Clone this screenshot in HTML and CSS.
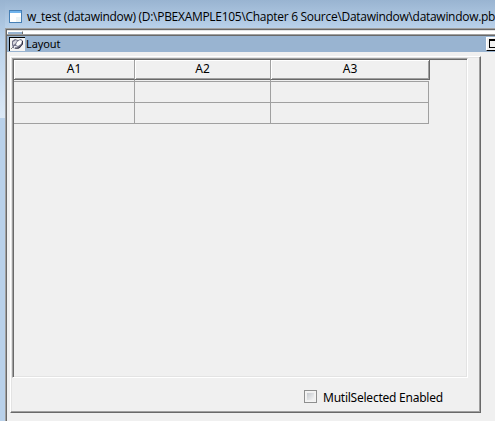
FILE: index.html
```html
<!DOCTYPE html>
<html lang="en">
<head>
<meta charset="utf-8">
<title>w_test</title>
<link rel="stylesheet" href="styles.css">
</head>
<body>
<div class="window">
  <header class="caption">
    <svg class="app-icon" width="13" height="13" viewBox="0 0 13 13" shape-rendering="crispEdges">
      <rect width="13" height="13" fill="#467fb5"/>
      <rect x="1" y="1" width="11" height="2" fill="#71b4ed"/>
      <rect x="1" y="3" width="11" height="9" fill="#fff"/>
      <rect x="7" y="7" width="5" height="5" fill="#eef4f5"/>
    </svg>
    <span class="caption-text">w_test (datawindow) (D:\PBEXAMPLE105\Chapter 6 Source\Datawindow\datawindow.pb</span>
  </header>
  <main class="client">
    <div class="splitter"><div class="thumb"></div></div>
    <div class="pane-title">
      <svg class="pin" width="16" height="14" viewBox="0 0 16 14">
        <rect width="16" height="14" fill="#f4f4f4"/>
        <path d="M0 0H16V1H1V14H0Z" fill="#000"/>
        <path d="M2 12L5 9" stroke="#888"/>
        <path d="M3 4L6 2L9 3L12 2L14 4V7L11 11L8 12L4 11L3 8Z" fill="#74748a"/>
        <path d="M4 5L7 3L8 4L6 7L4 8Z" fill="#d8d8e0"/>
        <path d="M8 5L11 3L13 4L12 7L9 9L7 8Z" fill="#fff"/>
        <path d="M5 9L7 9L9 10L8 11H5Z" fill="#e8e8f0"/>
        <path d="M13.5 4V7L10 11H6" fill="none" stroke="#333344"/>
      </svg>
      <span class="pane-name">Layout</span>
      <div class="maximize"><i></i></div>
    </div>
    <section class="form">
      <div class="data">
        <table class="grid">
          <colgroup><col class="c1"><col class="c2"><col class="c3"></colgroup>
          <thead><tr><th>A1</th><th>A2</th><th>A3</th></tr></thead>
          <tbody><tr><td></td><td></td><td></td></tr><tr><td></td><td></td><td></td></tr></tbody>
        </table>
      </div>
      <div class="option"><span class="check"></span><span class="option-text">MutilSelected Enabled</span></div>
    </section>
  </main>
</div>
</body>
</html>
```
FILE: styles.css
```css
* { box-sizing: border-box; }
body { margin: 0; overflow: hidden; }
.window {
  width: 495px; height: 421px; overflow: hidden; padding-left: 5px; color: #000;
  background: linear-gradient(#99b4d1, #b9d1ea 28px, #b9d1ea) 5px 0 / 490px 28px no-repeat,
    linear-gradient(#99b4d1, #b9d1ea 40px, #dce9f6 118px, #b9d1ea 118px);
}
.caption { height: 28px; display: flex; padding: 10px 0 0 4px; white-space: nowrap; }
.app-icon { flex: none; margin-right: 5px; }
.caption-text { font: 12px/14px "Open Sans", sans-serif; letter-spacing: -.29px; }
.client {
  width: 490px; height: 393px; background: #f0f0f0;
  border: solid #a0a0a0; border-width: 1px 0 0 1px;
  box-shadow: inset 1px 1px #696969;
  padding: 1px 0 0 1px;
}
.splitter {
  height: 6px; padding-left: 1px; background: #fff;
  border-top: 1px solid #e3e3e3; border-bottom: 1px solid #696969;
  box-shadow: inset 0 -1px #a0a0a0;
}
.thumb { width: 15px; height: 3px; background: #99b4d1; border-right: 1px solid #696969; border-top: 1px solid #fff; }
.pane-title { height: 16px; background: #99b4d1; display: flex; padding: 1px 0 0 2px; }
.pin { flex: none; }
.pane-name { font: 11px/14px "Noto Sans", sans-serif; margin-left: 1px; letter-spacing: -.1px; }
.maximize {
  width: 9px; height: 14px; margin-left: auto; padding: 1px 0 0 2px; background: #f0f0f0;
  border: solid; border-width: 1px 0 1px 1px; border-color: #fff #fff #000 #fff; overflow: hidden;
}
.maximize i { display: block; width: 12px; height: 9px; border: 1px solid #000; border-top-width: 2px; }
.form {
  width: 471px; height: 357px; margin: 4px 0 0 3px;
  border: solid; border-width: 1px; border-color: #fff #696969 #696969 #fff;
  box-shadow: inset -1px -1px #a0a0a0, inset 1px 1px #e3e3e3;
  padding: 1px;
}
.data {
  width: 456px; height: 320px;
  border: 1px solid; border-color: #a0a0a0 #fff #fff #a0a0a0;
  box-shadow: inset 1px 1px #696969, inset -1px -1px #e3e3e3;
  padding: 1px;
}
.grid { width: 416px; table-layout: fixed; border-collapse: separate; border-spacing: 0; font: 12px/14px "Noto Sans", sans-serif; }
.c1 { width: 121px; }
.c2 { width: 136px; }
.c3 { width: 159px; }
th {
  height: 20px; padding: 1px 0 3px; font-weight: normal;
  border-right: 1px solid #a0a0a0; border-bottom: 1px solid #696969;
  box-shadow: inset 1px 1px #fff, inset 0 -1px #a0a0a0;
}
th:last-child { border-right-color: #696969; box-shadow: inset 1px 1px #fff, inset -1px -1px #a0a0a0; }
td { height: 21px; padding: 0; border-right: 1px solid #a0a0a0; border-bottom: 1px solid #a0a0a0; }
td:last-child { border-right: 0; background: linear-gradient(#a0a0a0, #a0a0a0) 157px 0 / 1px 100% no-repeat; clip-path: inset(0 1px 0 0); }
tbody tr:first-child td { height: 23px; box-shadow: inset 0 1px #f0f0f0, inset 0 2px #a0a0a0; }
.option { display: flex; margin: 12px 0 0 292px; }
.check {
  width: 13px; height: 13px; border: 1px solid #8e8f8f; outline: 1px solid #f4f4f4; outline-offset: -2px;
  background: linear-gradient(135deg, #c5c9ce, #f6f6f6) content-box; padding: 2px;
}
.option-text { font: 12px/14px "Noto Sans", sans-serif; margin: 1px 0 0 6px; white-space: nowrap; letter-spacing: -.24px; }
```
